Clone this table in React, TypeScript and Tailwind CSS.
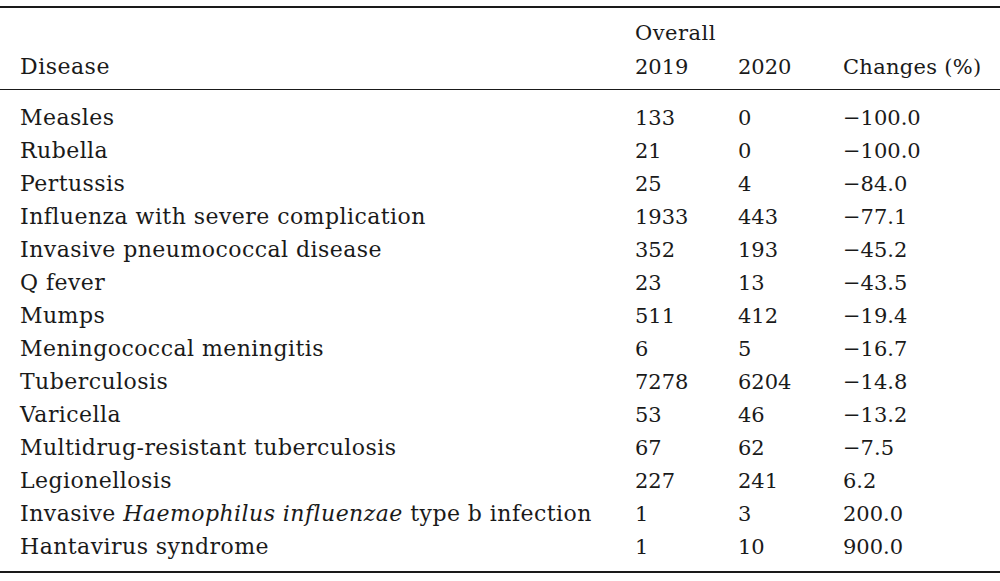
import React from "react";

const rows: [React.ReactNode, string, string, string][] = [
  ["Measles", "133", "0", "\u2212100.0"],
  ["Rubella", "21", "0", "\u2212100.0"],
  ["Pertussis", "25", "4", "\u221284.0"],
  ["Influenza with severe complication", "1933", "443", "\u221277.1"],
  ["Invasive pneumococcal disease", "352", "193", "\u221245.2"],
  ["Q fever", "23", "13", "\u221243.5"],
  ["Mumps", "511", "412", "\u221219.4"],
  ["Meningococcal meningitis", "6", "5", "\u221216.7"],
  ["Tuberculosis", "7278", "6204", "\u221214.8"],
  ["Varicella", "53", "46", "\u221213.2"],
  ["Multidrug-resistant tuberculosis", "67", "62", "\u22127.5"],
  ["Legionellosis", "227", "241", "6.2"],
  [
    <>
      Invasive <i>Haemophilus influenzae</i> type b infection
    </>,
    "1",
    "3",
    "200.0",
  ],
  ["Hantavirus syndrome", "1", "10", "900.0"],
];

export default function App() {
  return (
    <div
      className="w-[1000px] h-[581px] bg-white text-[#1a1a1a] text-[21px] pt-[6px]"
      style={{ fontFamily: '"DejaVu Serif", serif' }}
    >
      <div className="border-t-2 border-[#1a1a1a]" />
      <div className="grid grid-cols-[615px_103px_105px_1fr] pl-[20px] pt-[8px] pb-[5px] leading-[34px]">
        <div className="row-span-2 self-end text-[22px] tracking-[0.5px]">Disease</div>
        <div className="tracking-[0.5px]">Overall</div>
        <div></div>
        <div></div>
        <div>2019</div>
        <div>2020</div>
        <div className="tracking-[0.3px]">Changes (%)</div>
      </div>
      <div className="border-t-[1.5px] border-[#1a1a1a]" />
      <div className="pt-[11px] pb-[8px]">
        {rows.map((r, i) => (
          <div
            key={i}
            className="grid grid-cols-[615px_103px_105px_1fr] items-baseline pl-[20px] h-[33px] leading-[33px]"
          >
            <div className="text-[22px] tracking-[0.45px] whitespace-nowrap">{r[0]}</div>
            <div>{r[1]}</div>
            <div>{r[2]}</div>
            <div>{r[3]}</div>
          </div>
        ))}
      </div>
      <div className="border-t-2 border-[#1a1a1a]" />
    </div>
  );
}
